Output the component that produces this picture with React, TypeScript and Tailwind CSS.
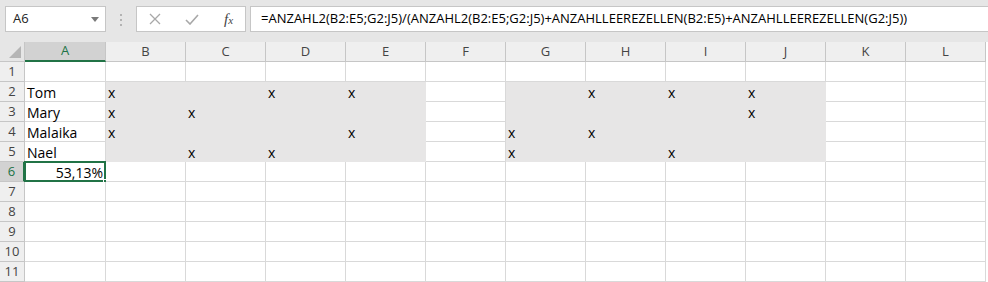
const cols = ["A", "B", "C", "D", "E", "F", "G", "H", "I", "J", "K", "L"];

// x marks per row (row number -> columns)
const marks: Record<number, string[]> = {
  2: ["B", "D", "E", "H", "I", "J"],
  3: ["B", "C", "J"],
  4: ["B", "E", "G", "H"],
  5: ["C", "D", "G", "I"],
};

const names: Record<number, string> = { 2: "Tom", 3: "Mary", 4: "Malaika", 5: "Nael" };

const shadedCols = ["B", "C", "D", "E", "G", "H", "I", "J"];

function Cell({ row, col }: { row: number; col: string }) {
  const shaded = row >= 2 && row <= 5 && shadedCols.includes(col);
  const selected = row === 6 && col === "A";
  const base = shaded
    ? "bg-[#e7e6e6] border-r border-b border-[#e7e6e6]"
    : "bg-white border-r border-b border-[#d9d9d9]";
  return (
    <div className={`relative flex items-end px-[2px] text-[14px] leading-[17px] text-black ${base}`}>
      {col === "A" && names[row] && <span>{names[row]}</span>}
      {marks[row]?.includes(col) && <span>x</span>}
      {selected && (
        <>
          <span className="ml-auto">53,13%</span>
          <div className="absolute -left-[1px] -top-[1px] -right-[1px] -bottom-[1px] border-2 border-[#217346]" />
          <div className="absolute -right-[4px] -bottom-[4px] h-[6px] w-[6px] border border-white bg-[#217346]" />
        </>
      )}
    </div>
  );
}

export default function App() {
  const rows = Array.from({ length: 11 }, (_, i) => i + 1);
  return (
    <div className="h-[282px] w-[988px] overflow-hidden bg-white font-['Segoe_UI','Open_Sans',sans-serif]">
      {/* formula bar */}
      <div className="flex h-[42px] items-start bg-[#e6e6e6] pt-[6px]">
        <div className="ml-[5px] flex h-[26px] w-[101px] items-center justify-between border border-[#c6c6c6] bg-white pl-[7px] pr-[6px] text-[13px] text-[#222]">
          <span>A6</span>
          <svg width="8" height="5" viewBox="0 0 8 5">
            <path d="M0 0h8L4 5z" fill="#7a7a7a" />
          </svg>
        </div>
        <div className="ml-[14px] mt-[8px] flex flex-col gap-[3px]">
          <span className="h-[2px] w-[2px] bg-[#b3b3b3]" />
          <span className="h-[2px] w-[2px] bg-[#b3b3b3]" />
          <span className="h-[2px] w-[2px] bg-[#b3b3b3]" />
        </div>
        <div className="ml-[14px] flex h-[26px] w-[110px] items-center border border-[#c6c6c6] bg-white">
          <svg className="ml-[12px]" width="12" height="12" viewBox="0 0 12 12">
            <path d="M1 1l10 10M11 1L1 11" stroke="#a8a8a8" strokeWidth="1.3" />
          </svg>
          <svg className="ml-[24px]" width="14" height="11" viewBox="0 0 14 11">
            <path d="M1 6l4 4L13 1" stroke="#a8a8a8" strokeWidth="1.6" fill="none" />
          </svg>
          <span className="ml-[25px] font-['Liberation_Serif',serif] text-[15px] italic leading-none text-[#444]">
            f<span className="text-[11px]">x</span>
          </span>
        </div>
        <div className="ml-[4px] flex h-[26px] flex-1 items-center border border-r-0 border-[#c6c6c6] bg-white pl-[10px] text-[13px] text-black">
          =ANZAHL2(B2:E5;G2:J5)/(ANZAHL2(B2:E5;G2:J5)+ANZAHLLEEREZELLEN(B2:E5)+ANZAHLLEEREZELLEN(G2:J5))
        </div>
      </div>

      {/* sheet */}
      <div className="grid grid-cols-[25px_81px_repeat(11,80px)] grid-rows-[20px_repeat(11,20px)]">
        <div className="relative border-r border-b border-[#c6c6c6] bg-[#e6e6e6]">
          <svg className="absolute bottom-[3px] right-[3px]" width="12" height="12" viewBox="0 0 12 12">
            <path d="M12 0v12H0z" fill="#b5b5b5" />
          </svg>
        </div>
        {cols.map((c) =>
          c === "A" ? (
            <div
              key={c}
              className="flex items-center justify-center border-r border-b-2 border-r-[#c6c6c6] border-b-[#217346] bg-[#d2d2d2] text-[13px] text-[#217346]"
            >
              {c}
            </div>
          ) : (
            <div
              key={c}
              className="flex items-center justify-center border-r border-b border-[#c6c6c6] bg-[#efefef] text-[13px] text-[#444]"
            >
              {c}
            </div>
          )
        )}
        {rows.map((r) => (
          <div key={r} className="contents">
            {r === 6 ? (
              <div className="flex items-center justify-center border-r-2 border-b border-r-[#217346] border-b-[#c6c6c6] bg-[#d2d2d2] text-[13px] text-[#217346]">
                {r}
              </div>
            ) : (
              <div className="flex items-center justify-center border-r border-b border-[#c6c6c6] bg-[#efefef] text-[13px] text-[#444]">
                {r}
              </div>
            )}
            {cols.map((c) => (
              <Cell key={c} row={r} col={c} />
            ))}
          </div>
        ))}
      </div>
    </div>
  );
}
